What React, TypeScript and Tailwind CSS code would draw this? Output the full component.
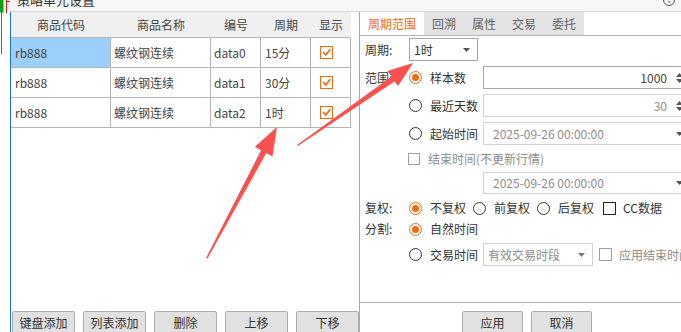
import React from "react";

function Radio({ checked }: { checked?: boolean }) {
  return checked ? (
    <span className="flex h-[13px] w-[13px] shrink-0 items-center justify-center rounded-full border border-[#f26a10] bg-white">
      <span className="h-[7px] w-[7px] rounded-full bg-[#f26a10]" />
    </span>
  ) : (
    <span className="block h-[13px] w-[13px] shrink-0 rounded-full border border-[#333] bg-white" />
  );
}

function Box({ dark, size = 13 }: { dark?: boolean; size?: number }) {
  return (
    <span
      className={
        size === 12
          ? "block h-[12px] w-[12px] shrink-0 border border-[#a0a0a0] bg-white"
          : dark
          ? "block h-[13px] w-[13px] shrink-0 border border-[#222] bg-white"
          : "block h-[13px] w-[13px] shrink-0 border border-[#a0a0a0] bg-white"
      }
    />
  );
}

function OrangeCheck() {
  return (
    <svg width="13" height="13" viewBox="0 0 13 13" className="shrink-0">
      <rect x="0.5" y="0.5" width="12" height="12" fill="white" stroke="#f06a0f" />
      <polyline points="3,6 5.8,9 10.2,3.2" fill="none" stroke="#f06a0f" strokeWidth="1.7" />
    </svg>
  );
}

function Down({ color = "#555" }: { color?: string }) {
  return (
    <svg width="7" height="4" viewBox="0 0 7 4" className="shrink-0">
      <polygon points="0,0 7,0 3.5,4" fill={color} />
    </svg>
  );
}

function Spin() {
  return (
    <div className="flex w-[16px] shrink-0 flex-col items-center justify-center gap-[2px]">
      <svg width="7" height="4" viewBox="0 0 7 4">
        <polygon points="0,4 7,4 3.5,0" fill="#555" />
      </svg>
      <svg width="7" height="4" viewBox="0 0 7 4">
        <polygon points="0,0 7,0 3.5,4" fill="#555" />
      </svg>
    </div>
  );
}

const rows = [
  { code: "rb888", name: "螺纹钢连续", id: "data0", period: "15分" },
  { code: "rb888", name: "螺纹钢连续", id: "data1", period: "30分" },
  { code: "rb888", name: "螺纹钢连续", id: "data2", period: "1时" },
];

export default function App() {
  return (
    <div className="relative flex h-[332px] w-[681px] overflow-hidden bg-white font-['Noto_Sans_CJK_SC','Noto_Sans',sans-serif] text-[12px] leading-[16px] text-[#333]">
      {/* chart strip outside dialog */}
      <div className="w-[10px] shrink-0">
        <svg width="10" height="332" viewBox="0 0 10 332">
          <rect x="0" y="0" width="3.5" height="12.5" fill="#11a011" />
          <line x1="1.5" y1="12" x2="1.5" y2="54" stroke="#11a011" strokeWidth="1" />
          <line x1="6.5" y1="0" x2="6.5" y2="13" stroke="#e01010" strokeWidth="1" />
          <line x1="6" y1="1.5" x2="10" y2="1.5" stroke="#e01010" strokeWidth="1" />
        </svg>
      </div>

      {/* dialog */}
      <div className="flex flex-1 flex-col">
        {/* title bar */}
        <div className="flex h-[12px] shrink-0 items-start border-b border-[#d6d6d6] bg-[#f7f7f7] pl-[7px]">
          <div className="mt-[-8px] text-[13px] leading-[16px] text-[#333]">策略单元设置</div>
          <svg width="28" height="11" viewBox="0 0 28 11" className="ml-auto shrink-0">
            <circle cx="6" cy="0" r="5.5" fill="none" stroke="#555" strokeWidth="1" />
            <line x1="6" y1="1" x2="6" y2="3" stroke="#555" strokeWidth="1" />
            <line x1="24" y1="6" x2="28" y2="2" stroke="#555" strokeWidth="1" />
          </svg>
        </div>

        {/* body */}
        <div className="flex flex-1">
          {/* left panel */}
          <div className="flex w-[350px] shrink-0 flex-col border-l border-r border-l-[#1a78d6] border-r-[#a9a9a9]">
            <div className="w-[340px]">
              <div className="flex h-[26px] border-b border-[#b5b5b5] bg-[#f0f0f0] text-[#444]">
                <div className="flex w-[100px] items-center justify-center">商品代码</div>
                <div className="flex w-[100px] items-center justify-center">商品名称</div>
                <div className="flex w-[50px] items-center justify-center">编号</div>
                <div className="flex w-[50px] items-center justify-center">周期</div>
                <div className="flex w-[40px] items-center justify-center">显示</div>
              </div>
              {rows.map((r, i) => (
                <div key={i} className="flex h-[30px] border-b border-[#b5b5b5] text-[#444]">
                  <div
                    className={
                      i === 0
                        ? "flex w-[100px] items-center border-r border-[#b5b5b5] bg-[#9ccffa] pl-[4px]"
                        : "flex w-[100px] items-center border-r border-[#b5b5b5] pl-[4px]"
                    }
                  >
                    {r.code}
                  </div>
                  <div className="flex w-[100px] items-center border-r border-[#b5b5b5] pl-[3px]">{r.name}</div>
                  <div className="flex w-[50px] items-center border-r border-[#b5b5b5] pl-[3px]">{r.id}</div>
                  <div className="flex w-[50px] items-center border-r border-[#b5b5b5] pl-[4px]">{r.period}</div>
                  <div className="flex w-[40px] items-center border-r border-[#b5b5b5] pl-[9px]">
                    <OrangeCheck />
                  </div>
                </div>
              ))}
            </div>
            <div className="mt-auto flex h-[21px] items-start gap-[8px] pl-[1px]">
              {["键盘添加", "列表添加", "删除", "上移", "下移"].map((t) => (
                <div
                  key={t}
                  className="flex h-[24px] w-[63px] shrink-0 items-center justify-center rounded-[2px] border border-[#adadad] bg-[#e1e1e1] text-[#333]"
                >
                  {t}
                </div>
              ))}
            </div>
          </div>

          {/* right panel */}
          <div className="flex flex-1 flex-col">
            <div className="flex h-[24px] shrink-0 border-b border-[#b4b4b4]">
              <div className="flex w-[64px] items-center justify-center bg-white text-[#f26a10]">周期范围</div>
              <div className="flex bg-[#e3e3e3]">
                {["回溯", "属性", "交易", "委托"].map((t) => (
                  <div key={t} className="flex w-[40px] items-center justify-center text-[#666]">
                    {t}
                  </div>
                ))}
              </div>
            </div>

            <div className="flex flex-col pl-[5px]">
              {/* 周期 */}
              <div className="mt-[2px] flex h-[23px] items-center">
                <div className="w-[44px] shrink-0">周期:</div>
                <div className="flex h-[23px] w-[69px] items-center border border-[#a5a5a5] pl-[4px] pr-[7px]">
                  <span>1时</span>
                  <span className="ml-auto flex">
                    <Down />
                  </span>
                </div>
              </div>

              {/* 样本数 */}
              <div className="mt-[5px] flex h-[23px] items-center">
                <div className="w-[44px] shrink-0">范围:</div>
                <div className="flex w-[74px] shrink-0 items-center gap-[8px]">
                  <Radio checked />
                  <span>样本数</span>
                </div>
                <div className="flex h-[23px] w-[205px] shrink-0 border border-[#a8a8a8]">
                  <div className="flex flex-1 items-center justify-end pr-[4px] text-[#444]">1000</div>
                  <Spin />
                </div>
              </div>

              {/* 最近天数 */}
              <div className="mt-[5px] flex h-[23px] items-center">
                <div className="w-[44px] shrink-0" />
                <div className="flex w-[74px] shrink-0 items-center gap-[8px]">
                  <Radio />
                  <span>最近天数</span>
                </div>
                <div className="flex h-[23px] w-[205px] shrink-0 border border-[#d2d2d2]">
                  <div className="flex flex-1 items-center justify-end pr-[4px] text-[#8c8c8c]">30</div>
                  <Spin />
                </div>
              </div>

              {/* 起始时间 */}
              <div className="mt-[5px] flex h-[23px] items-center">
                <div className="w-[44px] shrink-0" />
                <div className="flex w-[74px] shrink-0 items-center gap-[8px]">
                  <Radio />
                  <span>起始时间</span>
                </div>
                <div className="flex h-[23px] w-[205px] shrink-0 items-center border border-[#d2d2d2] pl-[9px] pr-[4px] text-[#8c8c8c]">
                  <span>2025-09-26 00:00:00</span>
                  <span className="ml-auto flex">
                    <Down />
                  </span>
                </div>
              </div>

              {/* 结束时间 */}
              <div className="mt-[4px] flex h-[20px] items-center">
                <div className="w-[43px] shrink-0" />
                <Box size={12} />
                <span className="ml-[8px] text-[#8c8c8c]">结束时间(不更新行情)</span>
              </div>

              {/* date 2 */}
              <div className="mt-[3px] flex h-[22px] items-center">
                <div className="w-[118px] shrink-0" />
                <div className="flex h-[22px] w-[205px] shrink-0 items-center border border-[#d2d2d2] pl-[9px] pr-[4px] text-[#8c8c8c]">
                  <span>2025-09-26 00:00:00</span>
                  <span className="ml-auto flex">
                    <Down />
                  </span>
                </div>
              </div>

              {/* 复权 */}
              <div className="mt-[4px] flex h-[20px] items-center">
                <div className="w-[44px] shrink-0">复权:</div>
                <Radio checked />
                <span className="ml-[8px]">不复权</span>
                <span className="ml-[7px] flex">
                  <Radio />
                </span>
                <span className="ml-[8px]">前复权</span>
                <span className="ml-[7px] flex">
                  <Radio />
                </span>
                <span className="ml-[8px]">后复权</span>
                <span className="ml-[9px] flex">
                  <Box dark />
                </span>
                <span className="ml-[7px]">CC数据</span>
              </div>

              {/* 分割 */}
              <div className="mt-[1px] flex h-[20px] items-center">
                <div className="w-[44px] shrink-0">分割:</div>
                <Radio checked />
                <span className="ml-[8px]">自然时间</span>
              </div>

              {/* 交易时间 */}
              <div className="mt-[4px] flex h-[23px] items-center">
                <div className="w-[44px] shrink-0" />
                <div className="flex w-[74px] shrink-0 items-center gap-[8px]">
                  <Radio />
                  <span>交易时间</span>
                </div>
                <div className="flex h-[23px] w-[110px] shrink-0 items-center border border-[#d2d2d2] pl-[4px] pr-[7px] text-[#8c8c8c]">
                  <span>有效交易时段</span>
                  <span className="ml-auto flex">
                    <Down color="#777" />
                  </span>
                </div>
                <span className="ml-[6px] flex">
                  <Box />
                </span>
                <span className="ml-[7px] whitespace-nowrap text-[#8c8c8c]">应用结束时间</span>
              </div>
            </div>

            <div className="mt-auto flex h-[30px] shrink-0 items-start gap-[8px] border-t border-[#b0b0b0] pl-[102px] pt-[8px]">
              {["应用", "取消"].map((t) => (
                <div
                  key={t}
                  className="flex h-[24px] w-[61px] shrink-0 items-center justify-center rounded-[2px] border border-[#adadad] bg-[#e1e1e1] text-[#333]"
                >
                  {t}
                </div>
              ))}
            </div>
          </div>
        </div>
      </div>

      {/* annotation arrows */}
      <svg className="pointer-events-none absolute left-0 top-0" width="681" height="332" viewBox="0 0 681 332">
        <polygon
          points="206,258 261.1,150.2 254.9,146.8 277,127 272.5,156.4 266.3,153 207.5,258.6"
          fill="#fa5050"
        />
        <polygon
          points="297,145 391.5,76.5 387.5,71 413,63 398,86 394.5,81.5 297.8,146"
          fill="#fa5050"
        />
      </svg>
    </div>
  );
}
